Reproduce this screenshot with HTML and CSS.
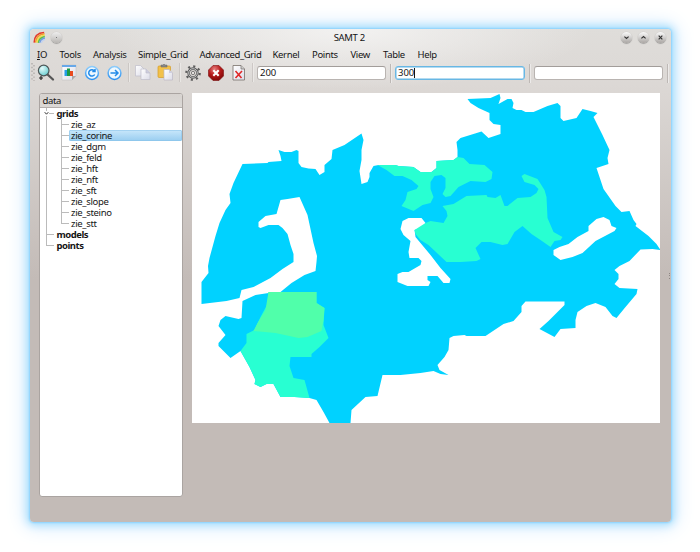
FILE: index.html
```html
<!DOCTYPE html>
<html lang="en">
<head>
<meta charset="utf-8">
<title>SAMT 2</title>
<link rel="stylesheet" href="styles.css">
</head>
<body>
<div class="window">
  <header class="titlebar">
    <svg class="rainbow" viewBox="0 0 14 14"><g fill="none" stroke-width="1.6"><path d="M1.2 12.5Q1.5 2 12 1.5" stroke="#e23a2e"/><path d="M2.8 12.5Q3.5 4 12.4 3" stroke="#f39a2a"/><path d="M4.3 12.6Q5 5.7 12.6 4.5" stroke="#f4e04a"/><path d="M5.8 12.7Q6.5 7.3 12.7 6" stroke="#5cbd4c"/><path d="M7.3 12.8Q8 8.8 12.8 7.5" stroke="#6d9be0"/><path d="M8.8 12.9Q9.5 10 12.9 9" stroke="#c3d3ee"/></g></svg>
    <span class="knob dot"></span>
    <h1 class="title">SAMT 2</h1>
    <span class="knob"><svg viewBox="0 0 12 12"><path d="M3.7 5 6 7l2.300-2"/></svg></span>
    <span class="knob"><svg viewBox="0 0 12 12"><path d="M3.700 7 6 5l2.300 2"/></svg></span>
    <span class="knob"><svg viewBox="0 0 12 12"><path d="m4 4 4 4M8 4 4 8"/></svg></span>
  </header>
  <nav class="menu">
    <span class="io"><u>I</u>O</span><span class="tools">Tools</span><span class="analysis">Analysis</span><span class="simple">Simple_Grid</span><span class="advanced">Advanced_Grid</span><span class="kernel">Kernel</span><span class="points">Points</span><span class="view">View</span><span class="table">Table</span><span>Help</span>
  </nav>
  <div class="toolbar">
    <svg class="icons" viewBox="30 62 226 22">
      <defs>
        <linearGradient id="paper" x1="0" y1="0" x2="1" y2="1"><stop offset="0" stop-color="#fff"/><stop offset="1" stop-color="#dcdce8"/></linearGradient>
        <radialGradient id="lens" cx=".35" cy=".3" r=".8"><stop offset="0" stop-color="#e4fbfb"/><stop offset="1" stop-color="#5fc9cc"/></radialGradient>
        <radialGradient id="red" cx=".4" cy=".25" r=".8"><stop offset="0" stop-color="#e88080"/><stop offset=".5" stop-color="#b51a1a"/><stop offset="1" stop-color="#7c0505"/></radialGradient>
        <linearGradient id="blue" x1="0" y1="0" x2="0" y2="1"><stop offset="0" stop-color="#8ccbfa"/><stop offset="1" stop-color="#2c91f0"/></linearGradient>
      </defs>
      <path d="M32 63v19M34 65v16" stroke="#aaa5a2" stroke-width="1.200" stroke-dasharray="1.400 2.400"/>
      <path d="m47 74 6 5.500" stroke="#555" stroke-width="2.300" stroke-linecap="round"/>
      <circle cx="43.700" cy="70.500" r="5.300" fill="url(#lens)" stroke="#4c5657" stroke-width="1.200"/>
      <path d="M39 78h4M41 76v4" stroke="#222" stroke-width="1.200"/>
      <path d="M62 65h14v11l-4 4H62z" fill="url(#paper)" stroke="#c4c2c4" stroke-width=".6"/>
      <path d="M62 65h14v2H62z" fill="#68a8e8"/><path d="M76 76h-4v4z" fill="#aaa"/>
      <path d="M64.500 70H67v6h-2.500z" fill="#259de8"/><path d="M67 68.500h3V76h-3z" fill="#1a9a48"/><path d="M70 71h3v5h-3z" fill="#e94b20"/>
      <g fill="#eef8ff" stroke="url(#blue)" stroke-width="1.500"><circle cx="92" cy="73" r="6.400"/><circle cx="114.500" cy="73" r="6.400"/></g>
      <g fill="none" stroke="#248be8" stroke-width="1.500"><path d="M94.500 71a3.200 3.200 0 1 0 .2 3.500M95 69v2.500h-2.700"/><path d="M110.500 73h7M115 70l3 3-3 3"/></g>
      <path d="M128.500 63v19M179.500 63v19M252.500 63v19" stroke="#bab5b2" stroke-width=".7"/><path d="M129.300 63v19M180.300 63v19M253.300 63v19" stroke="#f4f2f1" stroke-width=".7"/>
      <g fill="url(#paper)" stroke="#bebdca" stroke-width=".7"><path d="M135.500 65.500h5l3.500 3.500v7h-8.500z"/><path d="M141 69h5l4 4v6.500h-9z"/><path d="M146 69v4h4" fill="#ccccdf"/></g>
      <rect x="158" y="66" width="12.500" height="11.500" rx="1" fill="#f2c14a" stroke="#d49c27" stroke-width=".7"/><path d="M161 67v-2h2l1-1 1 1h2v2z" fill="#888" stroke="#666" stroke-width=".5"/>
      <path d="M164 69.500h5l3.500 3.500v7H164z" fill="url(#paper)" stroke="#bbb8c6" stroke-width=".7"/><path d="M169 69.500V73h3.500" fill="#cfcfdf"/>
      <circle cx="193" cy="73" r="6.700" fill="none" stroke="#5c5c5c" stroke-width="2.200" stroke-dasharray="2.100 3.162"/>
      <circle cx="193" cy="73" r="4.400" fill="none" stroke="#5c5c5c" stroke-width="2.600"/><circle cx="193" cy="73" r="4.300" fill="none" stroke="#c4c4c4" stroke-width="1"/><circle cx="193" cy="73" r="1.700" fill="#e4e1df" stroke="#666" stroke-width=".8"/>
      <path d="M213 65.500h6l4.500 4.500v6l-4.500 4.500h-6l-4.500-4.500v-6z" fill="url(#red)" stroke="#7c1111" stroke-width=".6"/><path d="m213.300 70.300 5.400 5.400m0-5.400-5.400 5.400" stroke="#fff" stroke-width="2.100"/>
      <path d="M233 65.500h8l3.500 3.500v11H233z" fill="url(#paper)" stroke="#77706a" stroke-width=".8"/><path d="M241 65.500V69h3.500" fill="#ccc" stroke="#77706a" stroke-width=".7"/><path d="m235.500 71 6 7m.5-7-6.500 7" stroke="#e02828" stroke-width="1.600"/>
    </svg>
    <div class="field">200</div><i class="separator"></i>
    <div class="field active">300<b class="caret"></b></div><i class="separator"></i>
    <div class="field"></div><i class="separator"></i>
  </div>
  <main class="content">
    <section class="tree">
      <div class="tree-head">data</div>
      <ul class="roots">
        <li><svg class="arrow" viewBox="0 0 5 5"><path d="m.7 1.200 1.800 2 1.800-2"/></svg><strong>grids</strong>
          <ul class="leaves">
            <li>zie_az</li><li class="selected">zie_corine</li><li>zie_dgm</li><li>zie_feld</li><li>zie_hft</li><li>zie_nft</li><li>zie_sft</li><li>zie_slope</li><li>zie_steino</li><li>zie_stt</li>
          </ul>
        </li>
        <li><strong>models</strong></li>
        <li><strong>points</strong></li>
      </ul>
    </section>
    <svg class="map" viewBox="191.500 93 468.500 330" preserveAspectRatio="none">
      <path class="sea" fill-rule="evenodd" d="M207.500 266 209 258 212 247 215 236 219 223 225 210 230 203 229 194 233 183 242 164 267 163 268 162 281 161 280 156 278 150 284 152 291 152 296 150 298 151 298 163 301 167 308 168.500 315 169 319 175 324 172 324 165 331 159 332 150 344 145 361 133.500 363 140 361 150 361 160 359 171 361 184 367 182 369 177 369 173 373 166 378 165 395 165 398 166 413 167 420 172 431 172 436 168 436 161 453 160 457 157 457 150 456 142 460 138 481 131.500 488 138 500 134 500 125 493 124 489 120 489 113 478 108 470 103 467 99 490 98 499 94 500 98 498 104 507 99 511 99 513 103 512 108 516 110 521 110 525 112 533 112 547 106 557 103 560 106 560 118 563 121 576 118 582 109 590 111 597 113 593 117 602 135 609 150 607 158 608 164 596 168 603 189 615 206 621 212 629 211 633 220 636 224 635 226 648 236 656 244 660 250 652 249 640 249.500 629 261 619 266 614 270 618 274 618 279 614 284 619 288 637 289 636 294 625 307 616 318 612 316 605 307 595 303 586 306 577 312 575 320 575 328 560 329 554 337 539 329 548 321 564 305 564 301.500 525 301.500 521 306 521 312 513 321 503 324 485 336 466 336 464 335 453 336 449 338 448 350 444 357 437 365 439 370 448 375 440 374 433 371 420 373 400 375 382 375 377 396 365 397 351 410 350 423 329 423 323 412 316 400 309 398 294 397 280 397 273 384 266 384 260 387 254 384 255 380 249 367 240 351 230 358 218 346 218 343 225 335 218 326 220 320 225 316 238 319 241 318 242 301 255 295 268 293 280 292 291 283 304 275 315 271 316 262 316.500 256 313 243 307 215 299 197 287 199 280 200 276 214 265 216 258 222 258 227 260 228 268 225 278 225 282 228 287 234 290 245 293 254 293 262 282 269 270 278 253 287 241 290 239 298 226 301 201 304 201 282 208 273Z M408 218 421 218 425 223 421 228 414 230 415 237 430 255 440 268 450 279 449 283 443 283 437 276 427 276 427 280 430 282 428 286 407 286 397 282 397 274 402 272 408 272 420 265 421 261 418 258 409 258 408 252 410 241 403 235 400 229 402 221Z M603 217 609 220 611 226 616 228 614 231 595 241 582 253 572 257 560 260 553 255 553 250 559 247 568 244 577 237 588 231 588 226 596 219Z"/>
      <path class="green" d="M377 165H395L398 166 413 167 420 172H431L436 168V161L453 160 457 157 463 158 469 164 484 165 492 172 491 179 485 182 470 181 458 187 450 196 445 197 442 194 445 188V178L441 175 434 176 430 182V189L433 197 430 203 422 205 413 211 401 206 405 200 407 192 416 189 418 186 411 180 402 176 394 176 386 170Z M442 206 453 204 466 196 486 195 487 197 495 198 500 195 504 206 507 206 517 198 530 197 536 193 538 189 534 185 524 182 521 176 524 174 537 179 544 190 546 197 547 218 553 232 562 237 560 240 554 241 550 247 540 240 531 234 522 226 514 232 507 244 502 245 490 242 481 242 475 248 480 259 476 261 460 262 446 262 428 245 420 240 415 234 414 230 425 223 430 221 443 223 447 216 446 211Z M240 351 246 343V334L254 330 260 317 267 304 268 292H316V303L324 308 323 325 328 338 319 347 311 354V357H290L289 366 293 378 304 380 309 398 294 397H280L273 384H266L260 387 254 384 255 380 249 367Z"/>
      <path class="lime" d="M268 292H316V303L324 308 323 320 321 331 307 337 298 338 275 333 253 331 257 323 265 310Z"/>
    </svg>
  </main>
</div>
</body>
</html>
```
FILE: styles.css
```css
* { box-sizing: border-box; }
body { margin: 0; padding: 29px 29px 29px 30px; height: 552px; overflow: hidden; background: #fff; font: 9.5px/11px "Noto Sans", sans-serif; letter-spacing: -.33px; color: #151515; }
ul { margin: 0; padding: 0; list-style: none; }
.window { height: 493px; border-radius: 4px; background: radial-gradient(ellipse 240px 60px at 50% 0, #f3f2f1, transparent), linear-gradient(#dfddda 0, #dcd8d5 55px, #c3bbb7 250px, #c3bbb7); box-shadow: 0 0 2px 1px #8cd3fd, 0 0 9px 3px #a5defd, 0 0 20px 5px #d6ebfd; }
.titlebar { height: 17px; display: flex; align-items: center; gap: 6px; padding: 0 5px 0 3px; }
.rainbow { width: 13px; height: 13px; }
.knob { width: 11px; height: 11px; border-radius: 50%; background: linear-gradient(#fafafa, #aaa6a3); box-shadow: 0 .5px 1px #777; }
.knob svg { display: block; width: 11px; height: 11px; fill: none; stroke: #333; stroke-width: 1.300; }
.dot { margin-left: -1.500px; background: radial-gradient(circle, #777 0 .7px, transparent 1px), linear-gradient(#eee, #b8b5b2); }
.title { flex: 1; margin: 0; padding-left: 16px; text-align: center; font-size: 9.500px; font-weight: 400; }
.menu { height: 16px; padding-left: 7px; display: flex; line-height: 17px; }
.io { width: 22.500px; } .tools { width: 33.500px; } .analysis { width: 45px; } .simple { width: 61.500px; } .advanced { width: 73px; letter-spacing: -.4px; } .kernel { width: 39.500px; } .points { width: 38.500px; } .view { width: 32.500px; } .table { width: 34.500px; }
.toolbar { height: 22px; display: flex; align-items: center; }
.icons { width: 226px; height: 22px; flex: none; }
.field { width: 129px; height: 14px; margin-left: 1px; padding: 0 2px; border: 1px solid #b9b4b1; border-top-color: #a29d9a; border-radius: 3px; background: #fff; line-height: 12px; display: flex; letter-spacing: 0; }
.active { width: 130px; border-color: #68b7e4; box-shadow: inset 0 0 0 .5px #68b7e4; }
.caret { width: 1px; height: 10px; margin-top: 1px; background: #111; }
.separator { width: 1px; height: 19px; margin: 0 3px 0 4px; background: #bdb8b5; box-shadow: 1px 0 #eceae9; }
.content { position: relative; margin: 9px 11px 0 9px; display: flex; gap: 8.500px; }
.content::after { content: ""; position: absolute; right: -10px; top: 180px; width: 1px; height: 6px; background: repeating-linear-gradient(#8d8683 0 1px, transparent 1px 2.500px); }
.tree { width: 144px; height: 404px; border: 1px solid #aaa4a1; border-radius: 3px; background: #fff; overflow: hidden; }
.tree-head { height: 14px; padding-left: 2.500px; line-height: 13px; background: linear-gradient(#d6d2cf, #dcd9d6); border-bottom: 1px solid #b5afac; }
.roots > li { position: relative; padding-left: 16.500px; }
.roots > li::before { content: ""; position: absolute; left: 6px; top: 0; width: 1px; height: 100%; background: #bbb; }
.roots > li:last-child::before { height: 6px; }
.roots > li::after { content: ""; position: absolute; left: 7px; top: 5px; width: 7px; height: 1px; background: #bbb; }
.roots strong { display: block; height: 11px; letter-spacing: -.48px; }
.arrow { position: absolute; z-index: 1; left: 4px; top: 3px; width: 5px; height: 5px; background: #fff; fill: none; stroke: #333; }
.leaves li { position: relative; height: 11px; margin-left: 12.500px; padding-left: 2px; border-radius: 2px; }
.leaves li::before { content: ""; position: absolute; left: -8px; top: 0; width: 1px; height: 11px; background: #bbb; }
.leaves li:last-child::before { height: 6px; }
.leaves li::after { content: ""; position: absolute; left: -7px; top: 5px; width: 7px; height: 1px; background: #bbb; }
.leaves .selected { background: linear-gradient(#c9e7fb, #98cdf0); box-shadow: inset 0 0 0 .5px #83c0e8; }
.map { width: 468.500px; height: 330px; flex: none; background: #fff; }
.sea { fill: #00d2ff; } .green { fill: #28ffd2; } .lime { fill: #50ffaa; }
```
